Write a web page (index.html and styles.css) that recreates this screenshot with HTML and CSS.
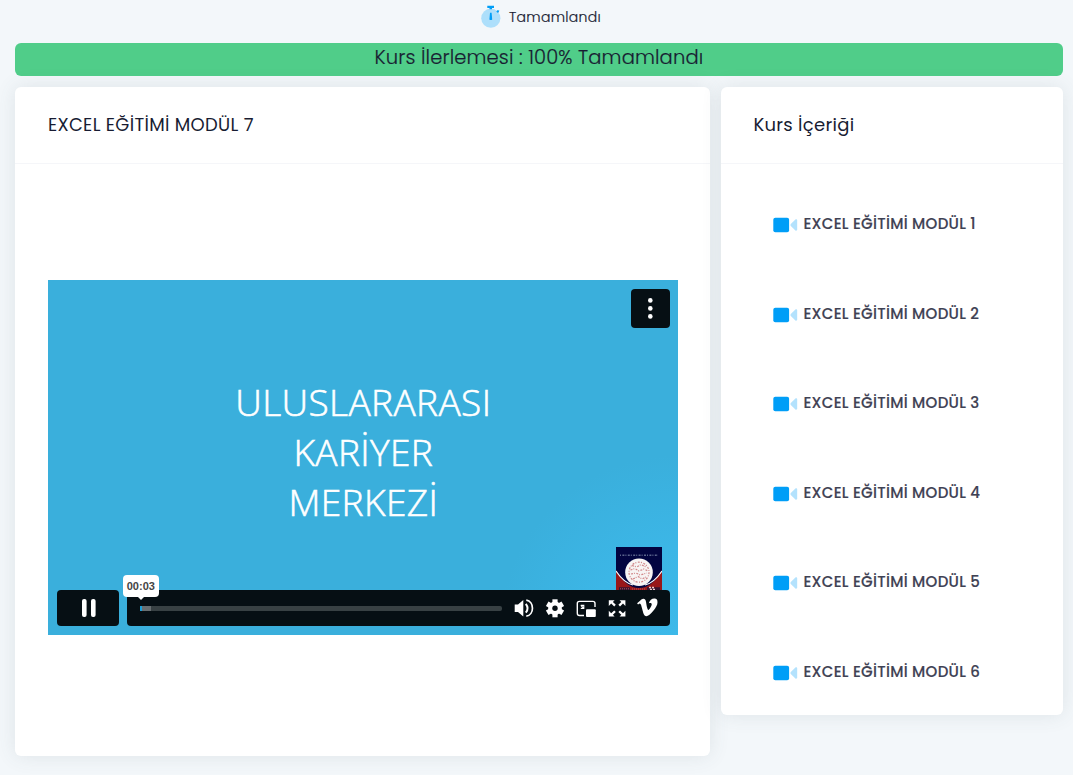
FILE: index.html
```html
<!DOCTYPE html>
<html lang="tr">

<head>
    <meta charset="UTF-8">
    <meta name="viewport" content="width=device-width, initial-scale=1.0">
    <title>Excel Eğitimi Modül 7</title>
    <link rel="stylesheet" href="styles.css">
</head>

<body>
    <svg class="sprite" aria-hidden="true">
        <symbol id="icon-video" viewBox="0 0 26 16">
            <rect class="video-body" x="0.3" y="0.8" width="15.8" height="14.4" rx="2" />
            <path class="video-lens" d="M17.8 7.1 22.4 2.6C23.2 1.9 24.2 2.4 24.2 3.4V12.6C24.2 13.6 23.2 14.1 22.4 13.4L17.8 8.9Q17 8 17.8 7.1Z" />
        </symbol>
    </svg>

    <div class="status">
        <svg class="status-icon" viewBox="0 0 22 24">
            <circle cx="10.8" cy="14.2" r="9.6" fill="#addffb" />
            <path d="M7.3 1.8H14V4H12V5.2H9.5V4H7.3Z" fill="#009ef7" />
            <path d="M16.4 7.5 17.2 6.2 19.3 6.4 18.6 8.6 17.5 8.8Z" fill="#009ef7" />
            <path d="M10 8.8H11.6L12.2 15.4Q10.8 16.8 9.4 15.4Z" fill="#009ef7" />
        </svg>
        <span class="status-text">Tamamlandı</span>
    </div>

    <div class="progress">
        <span class="progress-text">Kurs İlerlemesi : 100% Tamamlandı</span>
    </div>

    <div class="row">
        <div class="card card-player">
            <div class="card-header">
                <h3 class="card-title">EXCEL EĞİTİMİ MODÜL 7</h3>
            </div>
            <div class="player-body">
                <div class="video">
                    <div class="video-title">ULUSLARARASI<br>KARİYER<br>MERKEZİ</div>

                    <button class="more-btn" aria-label="Menu">
                        <svg viewBox="0 0 39 39" width="39" height="39" fill="#fff">
                            <circle cx="19.3" cy="11.4" r="2.3" />
                            <circle cx="19.3" cy="19.4" r="2.3" />
                            <circle cx="19.3" cy="27.4" r="2.3" />
                        </svg>
                    </button>

                    <svg class="badge" viewBox="0 0 46 46">
                        <rect width="46" height="46" fill="#020440" />
                        <path d="M0 23Q10 41 23 41T46 23V46H0Z" fill="#981719" />
                        <path d="M0 24Q8 36 17 38M46 24Q38 36 29 38" fill="none" stroke="#fff" stroke-width="1.2" />
                        <path d="M4 8.2H42" stroke="#5a648c" stroke-width="1.6" stroke-dasharray="1 1.4 2 1" />
                        <circle cx="23" cy="25.2" r="13.8" fill="#f7f4f4" />
                        <circle cx="23" cy="25.2" r="10" fill="none" stroke="#d08688" stroke-width="1.2" stroke-dasharray="2 1.2 1 1.5" />
                        <path d="M16 18.5 21 20 25 17.5 30 20M14.5 23 19 21.5 23 24 28 22 32 24M15 27 20 26 24 28 31 26M17 32 22 29.5 26 32 30 30" fill="none" stroke="#d08688" stroke-width="1.2" stroke-dasharray="2 1 1 1.5" />
                        <path d="M3 41.8H14M31 41.8H44" stroke="#371530" stroke-width="3" />
                        <path d="M4 41.8H13M16 42H29" stroke="#b5545a" stroke-width="1" stroke-dasharray="1 1" />
                        <path d="M33 40.5H38M34 42.5H40" stroke="#eecaca" stroke-width="1.3" stroke-dasharray="2 1" />
                    </svg>

                    <div class="controls">
                        <button class="play-btn" aria-label="Pause">
                            <svg viewBox="0 0 62 36" width="62" height="36" fill="#fff">
                                <rect x="25" y="9" width="4.6" height="18" rx="2" />
                                <rect x="34" y="9" width="4.6" height="18" rx="2" />
                            </svg>
                        </button>
                        <div class="bar">
                            <div class="track">
                                <div class="loaded"></div>
                                <div class="played"></div>
                                <div class="time">00:03</div>
                            </div>
                            <svg class="bar-icons" viewBox="0 0 160 36" width="160" height="36">
                                <!-- volume -->
                                <path d="M4.7 14.5H8L13.3 10V26.5L8 22H4.7Z" fill="#fff" />
                                <path d="M15.8 13.8Q19.3 18.2 15.8 22.6" fill="none" stroke="#fff" stroke-width="2" />
                                <path d="M16.3 10.2C24.5 11.4 24.5 25 16.3 26.2" fill="none" stroke="#fff" stroke-width="1.7" />
                                <!-- settings -->
                                <g transform="translate(45 18.3)">
                                    <g stroke="#fff" stroke-width="5.2">
                                        <path d="M0-9V9" />
                                        <path d="M0-9V9" transform="rotate(60)" />
                                        <path d="M0-9V9" transform="rotate(120)" />
                                    </g>
                                    <circle r="6.8" fill="#fff" />
                                    <circle r="2.7" fill="#060f14" />
                                </g>
                                <!-- picture in picture -->
                                <path d="M74 25.5H69.5Q67.3 25.5 67.3 23.3V13.5Q67.3 11.4 69.5 11.4H82.8Q85 11.4 85 13.5V17" fill="none" stroke="#fff" stroke-width="1.4" />
                                <path d="M70.8 15.4H73.8V18.4H70.8M70.8 15.4 73.8 18.4" fill="none" stroke="#fff" stroke-width="1.1" />
                                <rect x="76" y="19.3" width="9.8" height="7.7" rx="1" fill="#fff" />
                                <!-- fullscreen -->
                                <g fill="#fff">
                                    <path d="M98.8 10.2H104.6L102.9 12 105.8 14.8 104.2 16.4 101.2 13.5 98.8 16Z" />
                                    <path d="M115.4 10.2H109.6L111.3 12 108.4 14.8 110 16.4 113 13.5 115.4 16Z" />
                                    <path d="M98.8 26.6H104.6L102.9 24.8 105.8 22 104.2 20.4 101.2 23.3 98.8 20.8Z" />
                                    <path d="M115.4 26.6H109.6L111.3 24.8 108.4 22 110 20.4 113 23.3 115.4 20.8Z" />
                                </g>
                                <!-- vimeo -->
                                <g transform="translate(127.1 7.2) scale(.85)">
                                    <path fill="#fff" d="M23.98 6.42c-.11 2.34-1.74 5.54-4.89 9.6C15.83 20.25 13.07 22.36 10.82 22.36c-1.4 0-2.58-1.29-3.54-3.87L5.34 11.4C4.62 8.8 3.84 7.5 3.01 7.5c-.18 0-.81.38-1.89 1.13L0 7.18C1.19 6.14 2.35 5.1 3.5 4.06c1.59-1.37 2.77-2.09 3.57-2.16 1.87-.18 3.02 1.1 3.45 3.84.47 2.96.79 4.8.98 5.52.53 2.44 1.12 3.66 1.78 3.66.5 0 1.26-.8 2.27-2.39 1-1.58 1.54-2.79 1.62-3.62.14-1.36-.4-2.05-1.62-2.05-.58 0-1.17.14-1.78.4 1.18-3.87 3.43-5.75 6.77-5.64 2.47.07 3.63 1.67 3.44 4.8Z" />
                                </g>
                            </svg>
                        </div>
                    </div>
                </div>
            </div>
        </div>

        <div class="card card-content">
            <div class="card-header">
                <h3 class="card-title">Kurs İçeriği</h3>
            </div>
            <ul class="lessons">
                <li class="lesson"><svg class="lesson-icon"><use href="#icon-video" /></svg><span>EXCEL EĞİTİMİ MODÜL 1</span></li>
                <li class="lesson"><svg class="lesson-icon"><use href="#icon-video" /></svg><span>EXCEL EĞİTİMİ MODÜL 2</span></li>
                <li class="lesson"><svg class="lesson-icon"><use href="#icon-video" /></svg><span>EXCEL EĞİTİMİ MODÜL 3</span></li>
                <li class="lesson"><svg class="lesson-icon"><use href="#icon-video" /></svg><span>EXCEL EĞİTİMİ MODÜL 4</span></li>
                <li class="lesson"><svg class="lesson-icon"><use href="#icon-video" /></svg><span>EXCEL EĞİTİMİ MODÜL 5</span></li>
                <li class="lesson"><svg class="lesson-icon"><use href="#icon-video" /></svg><span>EXCEL EĞİTİMİ MODÜL 6</span></li>
            </ul>
        </div>
    </div>
</body>

</html>
```

FILE: styles.css
```css
* {
    box-sizing: border-box;
}

body {
    margin: 0;
    height: 775px;
    padding: 0 10.5px 0 15.4px;
    overflow: hidden;
    background-color: #f3f7fa;
    color: #181c32;
    font-family: Poppins, Inter, sans-serif;
}

button {
    display: block;
    padding: 0;
    border: 0;
}

.sprite {
    display: none;
}

.video-body {
    fill: #009ef7;
}

.video-lens {
    fill: #b3e2fd;
}

.status {
    display: flex;
    align-items: center;
    justify-content: center;
    height: 34px;
    padding-left: 3px;
}

.status-icon {
    width: 22px;
    height: 24px;
    margin: 0 7px 2px 0;
}

.status-text {
    font-size: 14px;
    font-weight: 300;
    letter-spacing: 0.3px;
    -webkit-text-stroke: 0.2px;
}

.progress {
    height: 33px;
    margin-top: 9px;
    border-radius: 6px;
    background-color: #50cd89;
    text-align: center;
    line-height: 29px;
}

.progress-text {
    font-size: 19.5px;
    font-weight: 300;
    letter-spacing: 0.13px;
    -webkit-text-stroke: 0.2px;
}

.row {
    display: flex;
    align-items: flex-start;
    gap: 10.5px;
    margin-top: 11px;
}

.card {
    border-radius: 6px;
    background-color: #fff;
    box-shadow: 0 0 20px rgba(76, 87, 100, 0.12);
}

.card-player {
    width: 695px;
    height: 669px;
}

.card-content {
    width: 342px;
    height: 627.5px;
}

.card-header {
    display: flex;
    align-items: center;
    height: 77px;
    padding: 0 32.5px;
    border-bottom: 1px solid #f5f6f9;
}

.card-title {
    margin: 0 0 1px;
    font-size: 18px;
    font-weight: 400;
    letter-spacing: 0.3px;
}

.player-body {
    padding: 116px 32.4px 0 32.6px;
}

.video {
    position: relative;
    display: flex;
    flex-direction: column;
    justify-content: space-between;
    width: 630px;
    height: 355px;
    padding: 97px 8px 9px 8.6px;
    background: radial-gradient(circle at 100% 100%, #3db9e9 0, #3cb6e6 90px, #3aafdc 180px);
}

.video-title {
    color: #fff;
    font-family: "Open Sans", sans-serif;
    font-size: 37px;
    font-weight: 300;
    letter-spacing: 0.4px;
    line-height: 50px;
    text-align: center;
    -webkit-text-stroke: 0.6px;
}

.more-btn {
    position: absolute;
    top: 9px;
    right: 8px;
    width: 39px;
    height: 39px;
    border-radius: 4px;
    background-color: #060f14;
}

.badge {
    position: absolute;
    right: 16px;
    bottom: 42px;
    width: 46px;
    height: 46px;
}

.controls {
    position: relative;
    display: flex;
    gap: 8px;
    height: 36px;
}

.play-btn {
    width: 62px;
    border-radius: 4px;
    background-color: #060f14;
}

.bar {
    display: flex;
    flex: 1;
    align-items: center;
    padding-left: 13px;
    border-radius: 4px;
    background-color: #060f14;
}

.track {
    position: relative;
    width: 362.4px;
    height: 5px;
    margin-right: 8px;
    border-radius: 2px;
    background-color: #384144;
}

.loaded {
    position: absolute;
    width: 11px;
    height: 5px;
    background-color: #686e71;
}

.played {
    position: absolute;
    width: 2px;
    height: 5px;
    background-color: #1b9fd8;
}

.time {
    position: absolute;
    left: -17px;
    bottom: 13.5px;
    width: 36.5px;
    height: 22px;
    border-radius: 4px;
    background-color: #fff;
    color: #444;
    font: 700 11px/22px "Liberation Sans", sans-serif;
    text-align: center;
}

.time::after {
    content: "";
    position: absolute;
    top: 100%;
    left: 15px;
    border: 3.5px solid transparent;
    border-top-color: #fff;
    border-bottom: 0;
}

.bar-icons {
    flex: none;
}

.lessons {
    margin: 0;
    padding: 15.5px 0 0 52px;
    list-style: none;
}

.lesson {
    display: flex;
    align-items: center;
    height: 89.6px;
    color: #3f4254;
    font-size: 15px;
    font-weight: 500;
    letter-spacing: 0.28px;
    -webkit-text-stroke: 0.15px;
}

.lesson span {
    margin-bottom: 1.5px;
}

.lesson-icon {
    width: 26px;
    height: 16px;
    margin: 1.6px 4.6px 0 0;
    -webkit-text-stroke: 0;
}
```
